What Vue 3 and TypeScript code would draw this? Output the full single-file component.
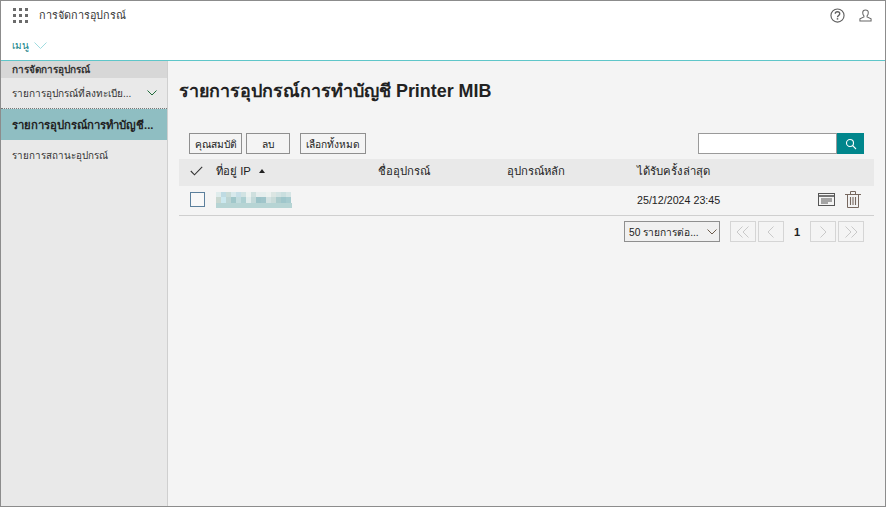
<script setup lang="ts">
const top = ['#dfecec', '#bfdbe3', '#c9dcd8', '#d8e9ec', '#c7dfe7', '#d1e3e3', '#ecf2f0', '#cfe0df', '#e6eded', '#e5eeed', '#ecf1ef', '#dce6e3', '#d3e3e3', '#cadfdf', '#d6e5e5']
const mid = ['#c9d8d1', '#cbe8ef', '#bcd4d3', '#a0c7ca', '#c2dcde', '#add0d2', '#e0ecec', '#c3d9d9', '#9cc3c8', '#a0c5ca', '#d3e2e2', '#c9dbd9', '#abcbcc', '#9fc6cb', '#a6cbcf']
const mosaic = [
  ...top.map((fill, i) => ({ x: i * 5, y: 0, w: 5, h: 5, fill })),
  ...mid.map((fill, i) => ({ x: i * 5, y: 5, w: 5, h: 6, fill })),
  { x: 0, y: 11, w: 76, h: 5, fill: '#b6d4d4' },
]
const dots = [0, 6, 12]
</script>

<template>
  <div class="app">
    <header class="top">
      <div class="bar">
        <div class="brand">
          <svg class="grid" width="15" height="15" viewBox="0 0 15 15">
            <g fill="#6b6b6b">
              <template v-for="y in dots" :key="y">
                <rect v-for="x in dots" :key="x" :x="x" :y="y" width="3" height="3" />
              </template>
            </g>
          </svg>
          <span class="title">การจัดการอุปกรณ์</span>
        </div>
        <div class="tools">
          <svg width="15" height="15" viewBox="0 0 16 16" fill="none" stroke="#5f5f5f" stroke-width="1.200">
            <circle cx="8" cy="8" r="7" />
            <path d="M5.600 6.200C5.600 4.800 6.700 4 8 4s2.400.8 2.400 2.100c0 1.800-2.400 1.900-2.400 3.700" stroke-width="1.400" />
            <path d="M8 10.800v1.600" stroke-width="1.600" />
          </svg>
          <svg width="13" height="13" viewBox="0 0 14 14" fill="none" stroke="#666" stroke-width="1.100">
            <path d="M7 1c-1.900 0-3 1.200-3 3 0 1.400.5 2.500 1.300 3.300v1.200L1 10.500V13h12v-2.500L8.700 8.500V7.300C9.500 6.500 10 5.400 10 4c0-1.800-1.100-3-3-3z" />
          </svg>
        </div>
      </div>
      <div class="menu-row">
        <span class="menu">เมนู</span>
        <svg width="13" height="7" viewBox="0 0 13 7" fill="none" stroke="#9fdce0" stroke-width="1"><path d="M.5.500 6.500 6.500 12.500.5" /></svg>
      </div>
    </header>

    <div class="body">
      <aside class="side">
        <div class="side-head">การจัดการอุปกรณ์</div>
        <div class="side-item dotted">
          <span class="label">รายการอุปกรณ์ที่ลงทะเบีย...</span>
          <svg width="10" height="6" viewBox="0 0 10 6" fill="none" stroke="#1f6b3a" stroke-width="1"><path d="M.5.500 5 5 9.500.5" /></svg>
        </div>
        <div class="side-item active">
          <span class="label">รายการอุปกรณ์การทำบัญชี...</span>
        </div>
        <div class="side-item plain">
          <span class="label">รายการสถานะอุปกรณ์</span>
        </div>
      </aside>

      <main class="main">
        <h1>รายการอุปกรณ์การทำบัญชี Printer MIB</h1>

        <div class="actions">
          <div class="btns">
            <button class="btn b1">คุณสมบัติ</button>
            <button class="btn b2">ลบ</button>
            <button class="btn b3">เลือกทั้งหมด</button>
          </div>
          <div class="search">
            <input class="search-input" type="text" />
            <div class="search-btn">
              <svg width="12" height="12" viewBox="0 0 12 12" fill="none" stroke="#fff" stroke-width="1.100">
                <circle cx="5" cy="5" r="3.500" />
                <path d="m7.700 7.700 3.300 3.300" />
              </svg>
            </div>
          </div>
        </div>

        <div class="row thead">
          <div class="c-check">
            <svg width="13" height="10" viewBox="0 0 13 10" fill="none" stroke="#333" stroke-width="1.100"><path d="M.8 5 4.500 8.800 12.200.8" /></svg>
          </div>
          <div class="c-ip">ที่อยู่ IP <span class="sort"></span></div>
          <div class="c-name">ชื่ออุปกรณ์</div>
          <div class="c-parent">อุปกรณ์หลัก</div>
          <div class="c-date">ได้รับครั้งล่าสุด</div>
        </div>

        <div class="row tbody">
          <div class="c-check"><span class="box"></span></div>
          <div class="c-ip">
            <svg class="mosaic" width="76" height="16" viewBox="0 0 76 16" shape-rendering="crispEdges">
              <rect v-for="(m, i) in mosaic" :key="i" :x="m.x" :y="m.y" :width="m.w" :height="m.h" :fill="m.fill" />
            </svg>
          </div>
          <div class="c-name"></div>
          <div class="c-parent"></div>
          <div class="c-date date">25/12/2024 23:45</div>
          <div class="row-icons">
            <svg width="17" height="13" viewBox="0 0 17 13" fill="none" stroke="#555" stroke-width="1">
              <rect x=".5" y=".5" width="16" height="12" />
              <path d="M1 3h15" stroke-width="1.600" />
              <path d="M3 6h11M3 8h11M3 10h7" />
            </svg>
            <svg width="16" height="17" viewBox="0 0 16 17" fill="none" stroke="#77685f" stroke-width="1">
              <path d="M0 3.500h16" />
              <path d="M5.500 3.500v-3h5v3" />
              <path d="M2.500 3.500v13h11v-13" />
              <path d="M5.500 6v8M8 6v8M10.500 6v8" stroke-width="1.100" />
            </svg>
          </div>
        </div>

        <div class="pager">
          <div class="select">
            <span>50 รายการต่อ...</span>
            <svg width="10" height="6" viewBox="0 0 10 6" fill="none" stroke="#6b5a4a" stroke-width="1"><path d="M.5.500 5 5 9.500.5" /></svg>
          </div>
          <div class="pages">
            <div class="pg">
              <svg width="14" height="12" viewBox="0 0 14 12" fill="none" stroke="#c9c9c9" stroke-width="1"><path d="M6.500.500 1 6l5.500 5.500M12.500.500 7 6l5.500 5.500" /></svg>
            </div>
            <div class="pg">
              <svg width="8" height="12" viewBox="0 0 8 12" fill="none" stroke="#c9c9c9" stroke-width="1"><path d="M6.500.500 1 6l5.500 5.500" /></svg>
            </div>
            <div class="num">1</div>
            <div class="pg">
              <svg width="8" height="12" viewBox="0 0 8 12" fill="none" stroke="#c9c9c9" stroke-width="1"><path d="M1.500.500 7 6l-5.500 5.500" /></svg>
            </div>
            <div class="pg">
              <svg width="14" height="12" viewBox="0 0 14 12" fill="none" stroke="#c9c9c9" stroke-width="1"><path d="M1.500.500 7 6l-5.500 5.500M7.500.500 13 6l-5.500 5.500" /></svg>
            </div>
          </div>
        </div>
      </main>
    </div>
  </div>
</template>

<style>
html, body { margin: 0; padding: 0; }
</style>

<style scoped>
.app {
  width: 886px;
  height: 507px;
  box-sizing: border-box;
  border: 1px solid #8c8c8c;
  display: flex;
  flex-direction: column;
  font-family: "Liberation Sans", "Noto Sans", Tahoma, sans-serif;
  color: #222;
  font-size: 12px;
  overflow: hidden;
  background: #fff;
}
.top {
  height: 60px;
  box-sizing: border-box;
  border-bottom: 1px solid #5fc6c9;
  flex: none;
}
.bar {
  height: 28px;
  padding: 0 13px 0 12px;
  box-sizing: border-box;
  display: flex;
  justify-content: space-between;
  align-items: center;
}
.brand { display: flex; align-items: center; gap: 11px; }
.title { font-size: 10.800px; color: #333; }
.tools { display: flex; align-items: center; gap: 14px; }
.menu-row {
  display: flex;
  align-items: center;
  gap: 5px;
  padding: 2px 0 0 11px;
  height: 31px;
  box-sizing: border-box;
}
.menu { font-size: 10px; color: #0f7f86; }
.body { flex: 1; display: flex; min-height: 0; }
.side {
  width: 167px;
  flex: none;
  box-sizing: border-box;
  background: #e9e9e9;
  border-right: 1px solid #cfcfcf;
}
.side-head {
  height: 17px;
  background: #d7d7d7;
  padding-left: 11px;
  font-size: 10px;
  font-weight: 700;
  line-height: 17px;
  color: #333;
}
.side-item {
  height: 31px;
  display: flex;
  align-items: center;
  justify-content: space-between;
  padding: 0 11px;
  font-size: 10px;
  color: #333;
  box-sizing: border-box;
}
.side-item.plain { font-size: 9.800px; }
.side-item.dotted { border-bottom: 1px dotted #777; }
.side-item svg { flex: none; margin-left: 8px; margin-right: -1px; }
.side-item.active {
  background: #8fbec2;
  font-weight: 700;
  font-size: 11.300px;
  color: #222;
}
.label {
  white-space: nowrap;
  min-width: 0;
}
.main {
  flex: 1;
  background: #f4f4f4;
  padding: 0 11px;
  min-width: 0;
}
h1 {
  margin: 0;
  padding-top: 19px;
  height: 72px;
  box-sizing: border-box;
  font-size: 17.900px;
  line-height: 22px;
  font-weight: 700;
  color: #222;
}
.actions {
  display: flex;
  justify-content: space-between;
  align-items: center;
  padding: 0 10px;
  height: 21px;
}
.btns { display: flex; gap: 0; }
.btn {
  height: 21px;
  padding: 0;
  background: #f4f4f4;
  border: 1px solid #8f8f8f;
  font: inherit;
  font-size: 10.200px;
  color: #222;
  box-sizing: border-box;
}
.b1 { width: 53px; margin-right: 4px; }
.b2 { width: 44px; margin-right: 10px; }
.b3 { width: 66px; }
.search { display: flex; }
.search-input {
  width: 139px;
  height: 21px;
  box-sizing: border-box;
  border: 1px solid #9a9a9a;
  background: #fff;
  padding: 0;
  margin: 0;
  outline: none;
}
.search-btn {
  width: 27px;
  height: 21px;
  background: #00868c;
  display: flex;
  align-items: center;
  justify-content: center;
}
.row { display: flex; align-items: center; }
.thead {
  margin-top: 5px;
  height: 27px;
  box-sizing: border-box;
  padding-bottom: 3px;
  background: #e9e9e9;
  font-size: 11.300px;
}
.tbody {
  height: 30px;
  box-sizing: border-box;
  padding-bottom: 2px;
  border-bottom: 1px solid #cfcfcf;
}
.c-check { width: 37px; flex: none; padding-left: 11px; box-sizing: border-box; display: flex; align-items: center; }
.c-ip { width: 162px; flex: none; display: flex; align-items: center; }
.c-name { width: 129px; flex: none; }
.c-parent { width: 130px; flex: none; }
.c-date { flex: 1; }
.date { font-size: 10.700px; }
.sort {
  display: inline-block;
  width: 0;
  height: 0;
  margin-left: 8px;
  border-left: 3px solid transparent;
  border-right: 3px solid transparent;
  border-bottom: 4px solid #222;
}
.box {
  width: 15px;
  height: 15px;
  box-sizing: border-box;
  border: 1px solid #5b7f9c;
  background: #f8f8f8;
  display: block;
}
.mosaic { display: block; }
.row-icons {
  display: flex;
  align-items: center;
  gap: 10px;
  padding-right: 13px;
}
.pager {
  display: flex;
  justify-content: space-between;
  align-items: center;
  padding: 5px 10px 0 445px;
}
.select {
  width: 96px;
  height: 21px;
  box-sizing: border-box;
  border: 1px solid #8f8f8f;
  background: #f0f0f0;
  display: flex;
  align-items: center;
  justify-content: space-between;
  padding: 0 2px 0 4px;
  font-size: 10.200px;
  white-space: nowrap;
}
.pages { display: flex; align-items: center; gap: 2px; }
.pg {
  width: 26px;
  height: 21px;
  box-sizing: border-box;
  border: 1px solid #d5d5d5;
  display: flex;
  align-items: center;
  justify-content: center;
}
.num {
  width: 22px;
  text-align: center;
  font-weight: 700;
  font-size: 11px;
}
</style>
